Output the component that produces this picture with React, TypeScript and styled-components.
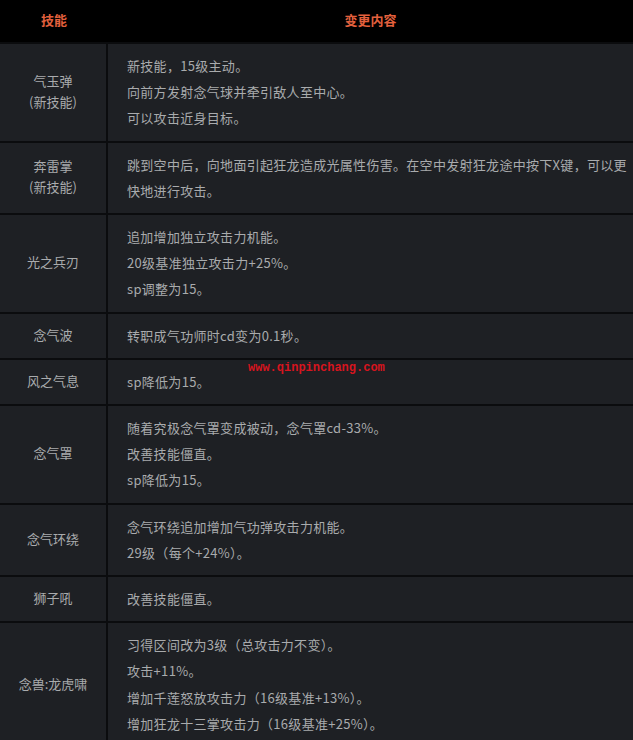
import styled, { createGlobalStyle } from 'styled-components';

type Skill = {
  name: string[];
  changes: string[];
};

const skills: Skill[] = [
  {
    name: ['气玉弹', '(新技能)'],
    changes: ['新技能，15级主动。', '向前方发射念气球并牵引敌人至中心。', '可以攻击近身目标。'],
  },
  {
    name: ['奔雷掌', '(新技能)'],
    changes: ['跳到空中后，向地面引起狂龙造成光属性伤害。在空中发射狂龙途中按下X键，可以更快地进行攻击。'],
  },
  {
    name: ['光之兵刃'],
    changes: ['追加增加独立攻击力机能。', '20级基准独立攻击力+25%。', 'sp调整为15。'],
  },
  { name: ['念气波'], changes: ['转职成气功师时cd变为0.1秒。'] },
  { name: ['风之气息'], changes: ['sp降低为15。'] },
  {
    name: ['念气罩'],
    changes: ['随着究极念气罩变成被动，念气罩cd-33%。', '改善技能僵直。', 'sp降低为15。'],
  },
  {
    name: ['念气环绕'],
    changes: ['念气环绕追加增加气功弹攻击力机能。', '29级（每个+24%）。'],
  },
  { name: ['狮子吼'], changes: ['改善技能僵直。'] },
  {
    name: ['念兽:龙虎啸'],
    changes: [
      '习得区间改为3级（总攻击力不变）。',
      '攻击+11%。',
      '增加千莲怒放攻击力（16级基准+13%）。',
      '增加狂龙十三掌攻击力（16级基准+25%）。',
    ],
  },
];

const App = () => {
  return (
    <>
      <GlobalStyle />
      <Page>
        <HeaderRow>
          <HeaderCell>技能</HeaderCell>
          <HeaderCell>变更内容</HeaderCell>
        </HeaderRow>
        {skills.map((skill) => (
          <Row key={skill.name.join('')}>
            <NameCell>
              {skill.name.map((line) => (
                <div key={line}>{line}</div>
              ))}
            </NameCell>
            <ChangeCell>
              {skill.changes.map((line) => (
                <p key={line}>{line}</p>
              ))}
            </ChangeCell>
          </Row>
        ))}
        <Watermark>www.qinpinchang.com</Watermark>
      </Page>
    </>
  );
};

export default App;

const GlobalStyle = createGlobalStyle`
  body {
    margin: 0;
    background: #1e2024;
  }
`;

const Page = styled.div`
  position: relative;
  width: 633px;
  height: 740px;
  overflow: hidden;
  background: #1e2024;
  color: #a9abad;
  font-family: 'Noto Sans CJK SC', 'Noto Sans', sans-serif;
  font-size: 13px;
`;

const HeaderRow = styled.div`
  display: grid;
  grid-template-columns: 108px 1fr;
  height: 42px;
  background: #000;
`;

const HeaderCell = styled.div`
  display: flex;
  align-items: center;
  justify-content: center;
  padding-bottom: 4px;
  color: #e3603d;
  font-weight: bold;
  font-size: 13px;
`;

const Row = styled.div`
  display: grid;
  grid-template-columns: 108px 1fr;
  border-top: 2px solid #0b0c0e;
`;

const NameCell = styled.div`
  display: flex;
  flex-direction: column;
  align-items: center;
  justify-content: center;
  border-right: 2px solid #0b0c0e;
  line-height: 21px;
  text-align: center;
  padding-bottom: 3px;
`;

const ChangeCell = styled.div`
  padding: 9px 6px 9px 19px;
  line-height: 26.2px;
  letter-spacing: 0.3px;

  p {
    margin: 0;
  }
`;

const Watermark = styled.div`
  position: absolute;
  left: 248px;
  top: 361px;
  color: #d8141e;
  font-family: 'Liberation Mono', 'DejaVu Sans Mono', monospace;
  font-weight: bold;
  font-size: 12px;
`;
